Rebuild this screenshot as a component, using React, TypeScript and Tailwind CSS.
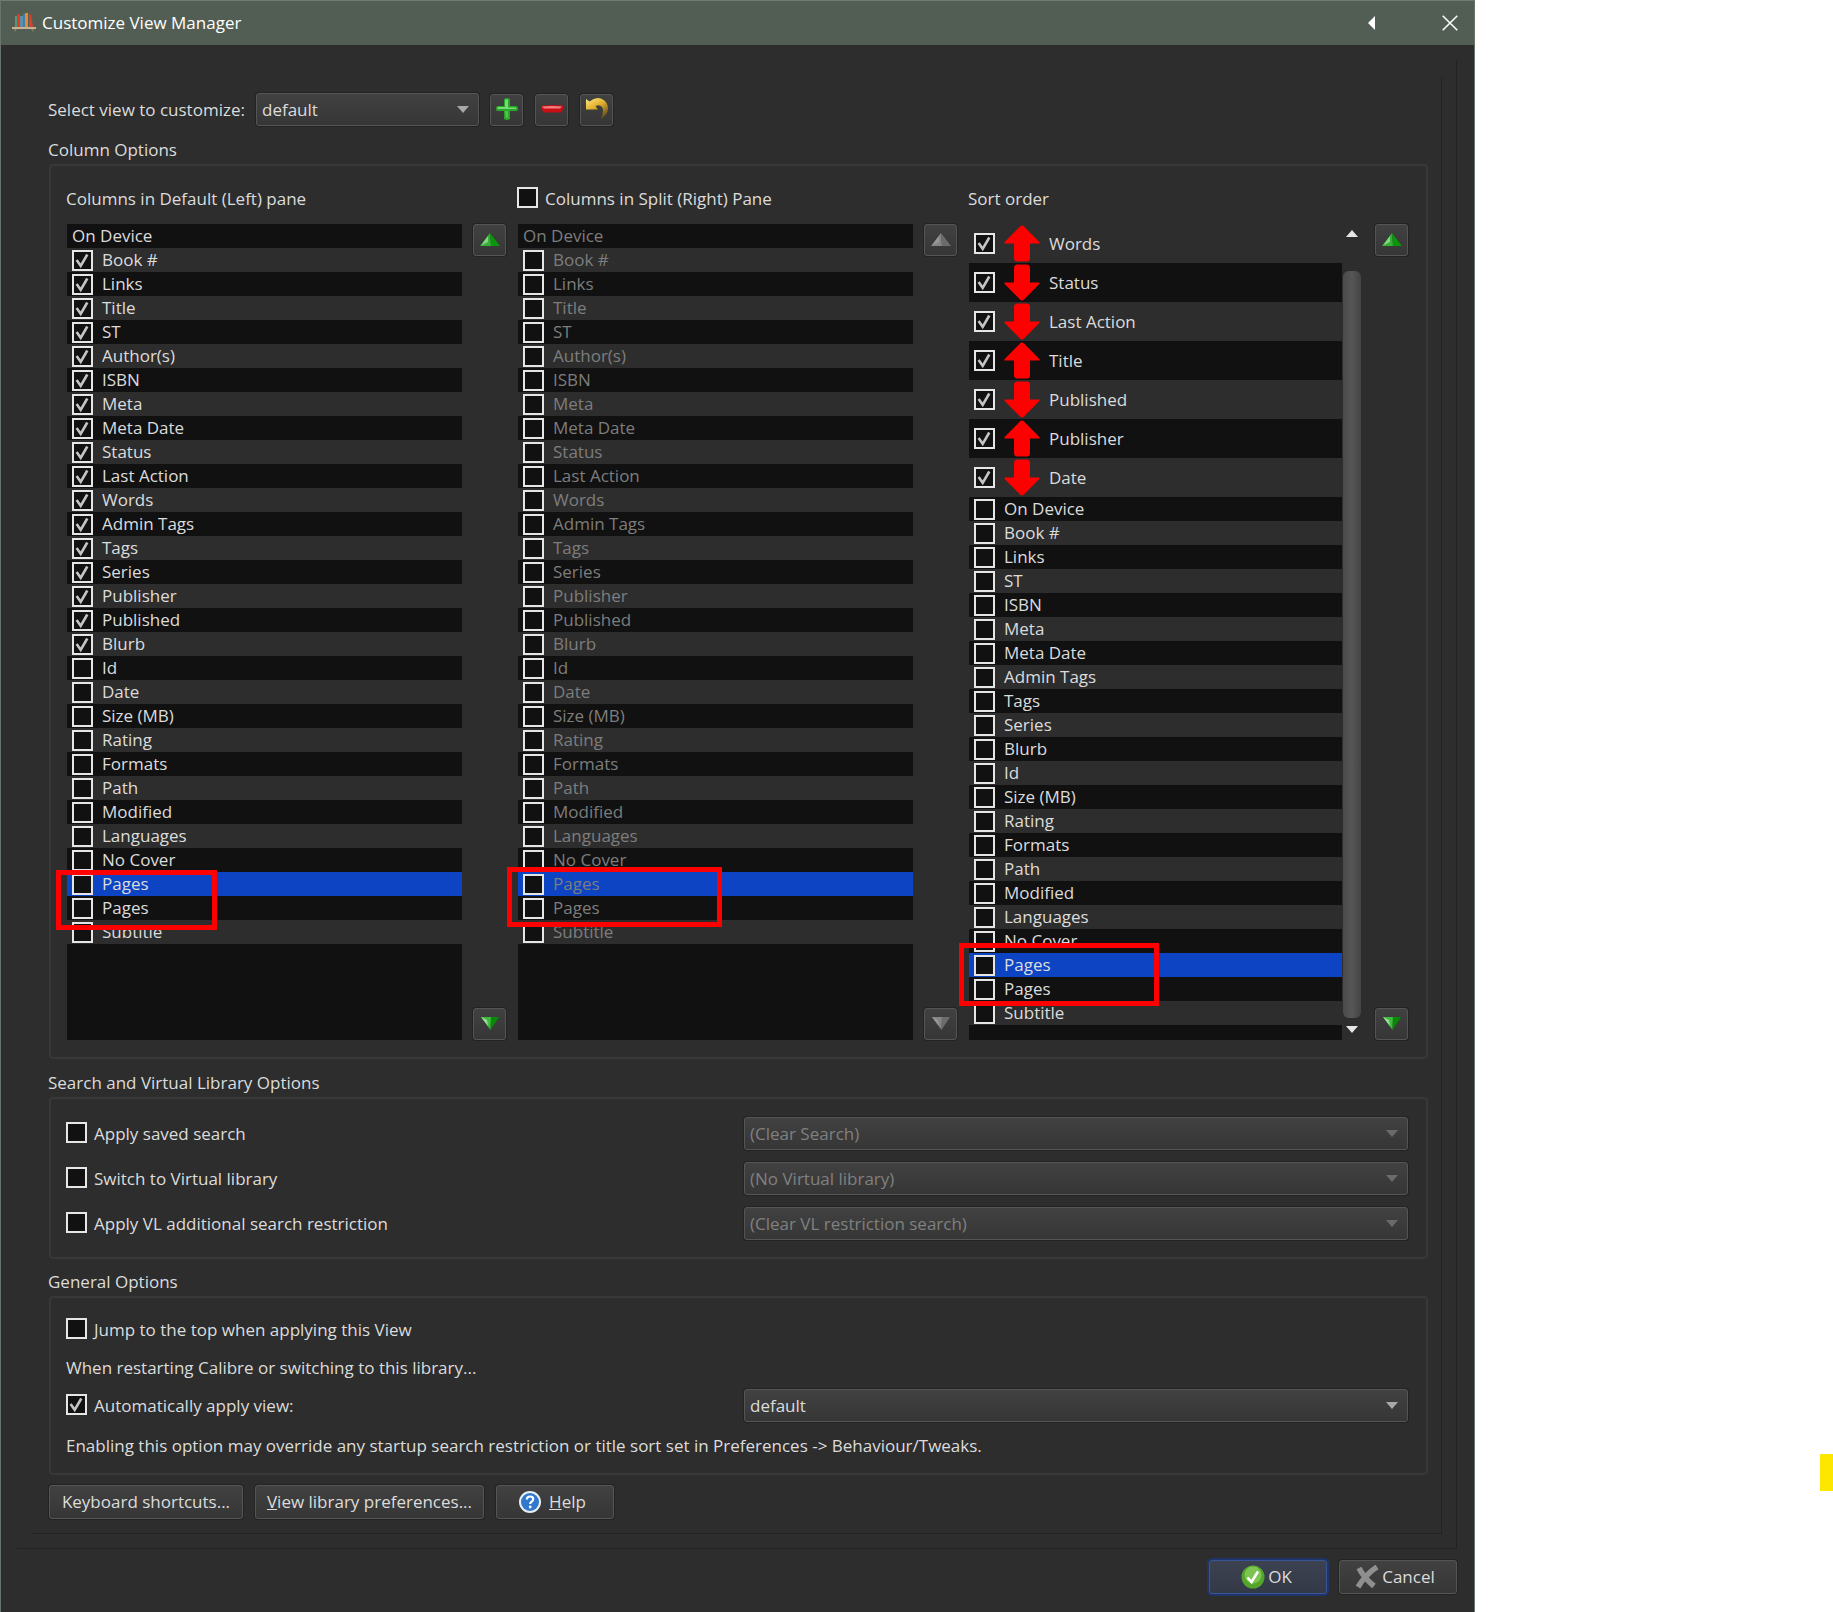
import React, { useState } from 'react';

const BOOK_COLUMNS = [
  'On Device', 'Book #', 'Links', 'Title', 'ST', 'Author(s)', 'ISBN', 'Meta', 'Meta Date', 'Status',
  'Last Action', 'Words', 'Admin Tags', 'Tags', 'Series', 'Publisher', 'Published', 'Blurb', 'Id', 'Date',
  'Size (MB)', 'Rating', 'Formats', 'Path', 'Modified', 'Languages', 'No Cover', 'Pages', 'Pages', 'Subtitle',
];

const LAST_VISIBLE = 17;
const SELECTED = 27;

const SORTED: { name: string; dir: 'up' | 'down' }[] = [
  { name: 'Words', dir: 'up' },
  { name: 'Status', dir: 'down' },
  { name: 'Last Action', dir: 'down' },
  { name: 'Title', dir: 'up' },
  { name: 'Published', dir: 'down' },
  { name: 'Publisher', dir: 'up' },
  { name: 'Date', dir: 'down' },
];

const UNSORTED = [
  'On Device', 'Book #', 'Links', 'ST', 'ISBN', 'Meta', 'Meta Date', 'Admin Tags', 'Tags', 'Series', 'Blurb',
  'Id', 'Size (MB)', 'Rating', 'Formats', 'Path', 'Modified', 'Languages', 'No Cover', 'Pages', 'Pages', 'Subtitle',
];
const UNSORTED_SELECTED = 19;

interface CheckProps {
  label: string;
  checked?: boolean;
  disabled?: boolean;
  children?: React.ReactNode;
  className?: string;
}

const Check: React.FC<CheckProps> = ({ label, checked = false, disabled = false, children, className = 'items-center' }) => {
  const [on, setOn] = useState(checked);

  return (
    <label className={`flex ${className}`}>
      <span className="grid shrink-0">
        <input
          type="checkbox"
          checked={on}
          disabled={disabled}
          onChange={() => setOn(!on)}
          className="col-start-1 row-start-1 size-[21px] appearance-none border-2 border-[#e6e6e6] bg-[#111111]"
        />
        {on && (
          <svg viewBox="0 0 21 21" className="pointer-events-none col-start-1 row-start-1 size-[21px]" fill="none">
            <path d="M4.600 10 L8.700 15.800 L15.300 4.500" stroke="#c4c4c4" strokeWidth="2.600" />
          </svg>
        )}
      </span>
      {children}
      <span>{label}</span>
    </label>
  );
};

interface ComboProps {
  label: string;
  value: string;
  disabled?: boolean;
  className?: string;
}

const Combo: React.FC<ComboProps> = ({ label, value, disabled = false, className = '' }) => (
  <div className={`grid items-center ${className}`}>
    <select
      aria-label={label}
      disabled={disabled}
      className="col-start-1 row-start-1 h-[33px] w-full appearance-none rounded-[3px] border border-[#555555] bg-linear-to-b from-[#414141] to-[#363636] pl-[5px] text-[#dcdcdc] opacity-100 shadow-[0_0_0_1px_#232323] disabled:text-[#808080]"
    >
      <option>{value}</option>
    </select>
    <svg
      viewBox="0 0 12 8"
      className={`pointer-events-none col-start-1 row-start-1 mr-[10px] h-[8px] w-[12px] justify-self-end ${disabled ? 'text-[#6a6a6a]' : 'text-[#a8a8a8]'}`}
    >
      <path d="M0 0 H12 L6 7 Z" fill="currentColor" />
    </svg>
  </div>
);

const ToolButton: React.FC<{ label: string; disabled?: boolean; children: React.ReactNode }> = ({ label, disabled, children }) => (
  <button
    type="button"
    aria-label={label}
    disabled={disabled}
    className="flex h-[32px] w-[33px] items-center justify-center rounded-[3px] border border-[#555555] bg-linear-to-b from-[#414141] to-[#363636] shadow-[0_0_0_1px_#232323]"
  >
    {children}
  </button>
);

const TextButton: React.FC<{ children: React.ReactNode; className?: string }> = ({ children, className = '' }) => (
  <button
    type="button"
    className={`flex h-[34px] items-center justify-center rounded-[3px] border border-[#555555] bg-linear-to-b from-[#414141] to-[#363636] shadow-[0_0_0_1px_#232323] ${className}`}
  >
    {children}
  </button>
);

const MoveIcon: React.FC<{ dir: 'up' | 'down'; disabled?: boolean }> = ({ dir, disabled }) => (
  <svg viewBox="0 0 20 14" className="h-[14px] w-[20px]">
    {dir === 'up' ? (
      <>
        <path d="M10 0 L0 13 H11 Z" fill={disabled ? '#858585' : '#35b035'} />
        <path d="M10 0 L20 13 H11 Z" fill={disabled ? '#6c6c6c' : '#0a960a'} />
        <path d="M8 3 L1 12.500 L8 9 Z" fill={disabled ? '#999999' : '#86d486'} />
      </>
    ) : (
      <>
        <path d="M1 0 H11 L10.500 13 Z" fill={disabled ? '#858585' : '#3dbb3d'} />
        <path d="M19 0 H11 L10.500 13 Z" fill={disabled ? '#6c6c6c' : '#078a07'} />
        <path d="M1 0 L8 9 L7 3 Z" fill={disabled ? '#999999' : '#a0dca0'} />
      </>
    )}
  </svg>
);

const SortArrow: React.FC<{ dir: 'up' | 'down' }> = ({ dir }) => (
  <svg viewBox="0 0 36 37" className={`mx-[9px] h-[37px] w-[36px] ${dir === 'down' ? 'rotate-180' : ''}`}>
    <path
      d="M18 .5 Q19 .5 20 1.6 L35.3 17 Q36.3 18.5 34.5 18.5 H26 V33 Q26 36.5 22.5 36.5 H13.5 Q10 36.5 10 33 V18.5 H1.5 Q-.3 18.5 .7 17 L16 1.6 Q17 .5 18 .5 Z"
      fill="#ff0000"
    />
  </svg>
);

const MoveButtons: React.FC<{ disabled?: boolean; name: string }> = ({ disabled, name }) => (
  <div className="flex shrink-0 flex-col justify-between">
    <ToolButton label={`Move ${name} up`} disabled={disabled}><MoveIcon dir="up" disabled={disabled} /></ToolButton>
    <ToolButton label={`Move ${name} down`} disabled={disabled}><MoveIcon dir="down" disabled={disabled} /></ToolButton>
  </div>
);

const ColumnList: React.FC<{ disabled?: boolean }> = ({ disabled = false }) => (
  <ul className={`h-[816px] flex-1 bg-[#111111] ${disabled ? 'text-[#7d7d7d]' : ''}`}>
    {BOOK_COLUMNS.map((name, i) => (
      <li
        key={i}
        className={`flex h-[24px] items-center pl-[5px] ${i === SELECTED ? 'bg-[#0c44c4]' : i % 2 ? 'bg-[#2d2d2d]' : 'bg-[#111111]'}`}
      >
        {i === 0 ? <span>{name}</span> : (
          <Check label={name} disabled={disabled} checked={!disabled && i <= LAST_VISIBLE} className="items-center gap-[9px]" />
        )}
      </li>
    ))}
  </ul>
);

const SortList: React.FC = () => (
  <ul className="h-[816px] flex-1 bg-[#111111]">
    {SORTED.map(({ name, dir }, i) => (
      <li key={name} className={`flex h-[39px] items-center pl-[5px] ${i % 2 ? 'bg-[#111111]' : 'bg-[#2d2d2d]'}`}>
        <Check label={name} checked><SortArrow dir={dir} /></Check>
      </li>
    ))}
    {UNSORTED.map((name, i) => (
      <li
        key={i}
        className={`flex h-[24px] items-center pl-[5px] ${i === UNSORTED_SELECTED ? 'bg-[#0c44c4]' : i % 2 ? 'bg-[#2d2d2d]' : 'bg-[#111111]'}`}
      >
        <Check label={name} className="items-center gap-[9px]" />
      </li>
    ))}
  </ul>
);

const ScrollBar: React.FC = () => (
  <div className="flex w-[20px] flex-col items-center justify-between pt-[6px] pb-[7px]">
    <svg viewBox="0 0 12 7" className="h-[7px] w-[12px]"><path d="M0 7 L6 0 L12 7 Z" fill="#e6e6e6" /></svg>
    <div className="mt-[34px] mb-[8px] w-[18px] flex-1 rounded-[6px] bg-linear-to-r from-[#4a4a4a] via-[#565656] to-[#444444]" />
    <svg viewBox="0 0 12 7" className="h-[7px] w-[12px]"><path d="M0 0 L6 7 L12 0 Z" fill="#e6e6e6" /></svg>
  </div>
);

const Group: React.FC<{ title: string; children: React.ReactNode; className?: string }> = ({ title, children, className = '' }) => (
  <section>
    <h2 className="h-[28px] pl-[1px] leading-[28px]">{title}</h2>
    <div className={`ml-[2px] rounded-[4px] border-2 border-[#383838] ${className}`}>{children}</div>
  </section>
);

const BooksIcon: React.FC = () => (
  <svg viewBox="0 0 24 22" className="h-[22px] w-[24px]">
    <rect x="3" y="4" width="2" height="11" fill="#4f9a78" />
    <rect x="5" y="2" width="3" height="13" fill="#e03a22" />
    <rect x="8" y="4" width="3" height="11" fill="#5f8fa8" />
    <rect x="11" y="2" width="2" height="13" fill="#3b7fb5" />
    <rect x="13" y="1" width="3" height="14" fill="#e88a2c" />
    <path d="M17 3 l2 -1 l2 13 h-4 Z" fill="#d6402a" />
    <path d="M0 15 H24 V17 H0 Z" fill="#c8b090" />
    <path d="M2 17 h3 l-2 3 Z M19 17 h3 l-1 3 Z" fill="#8a7a60" />
  </svg>
);

const App: React.FC = () => (
  <div className="flex min-h-screen bg-white font-['Open_Sans',sans-serif] text-[17px] leading-[24px] text-[#dcdcdc]">
    <div className="flex flex-1 flex-col border-x border-[#66746a] bg-[#2d2d2d]">
      <header className="flex h-[45px] items-center border-t border-[#6b7d6f] bg-[#525e54] pl-[11px] pr-[16px] text-white">
        <BooksIcon />
        <h1 className="ml-[6px] flex-1">Customize View Manager</h1>
        <button type="button" aria-label="Collapse" className="mr-[66px]">
          <svg viewBox="0 0 8 14" className="h-[14px] w-[8px]"><path d="M7 0 V14 L0 7 Z" fill="#ffffff" /></svg>
        </button>
        <button type="button" aria-label="Close">
          <svg viewBox="0 0 16 16" className="h-[16px] w-[16px]"><path d="M.7 .7 L15.3 15.3 M15.3 .7 L.7 15.3" stroke="#ffffff" strokeWidth="1.5" /></svg>
        </button>
      </header>

      <div className="ml-[16px] mr-[17px] mt-[15px] border-r border-b border-[#222222] pb-[14px] pr-[14px]">
        <div className="ml-[15px] mt-[17px] border-r border-b border-[#222222] pl-[15px] pr-[13px] pt-[16px] pb-[14px]">
          {/* View picker */}
          <div className="flex items-center">
            <span className="w-[209px] pl-[1px]">Select view to customize:</span>
            <Combo label="Select view to customize" value="default" className="w-[223px]" />
            <div className="ml-[11px] flex gap-[12px]">
              <ToolButton label="Add view">
                <svg viewBox="0 0 24 24" className="mb-[2px] size-[24px]">
                  <path d="M9 2 Q12 0 15 2 V9 H22 Q24 12 22 14 H15 V22 Q12 24 9 22 V14 H2 Q0 12 2 9 H9 Z" fill="#2aa52a" />
                  <path d="M10 3 Q12 1.500 13 3 V10.500 H21 V12 H3 Q2 11 3 10 H10 Z" fill="#72dc72" />
                  <path d="M10 14 H13 V21 H11 Z" fill="#4cc64c" />
                </svg>
              </ToolButton>
              <ToolButton label="Remove view">
                <svg viewBox="0 0 24 24" className="mb-[2px] size-[24px]">
                  <path d="M1 9 Q12 7.500 23 8.500 Q23.500 13 21 15.500 H4 Q1 13 1 9 Z" fill="#c80f18" />
                  <path d="M2 9.500 Q12 8.500 22 9.500 L20 11.500 H4 Z" fill="#f08080" />
                </svg>
              </ToolButton>
              <ToolButton label="Undo changes">
                <svg viewBox="0 0 24 24" className="mb-[2px] size-[24px]">
                  <defs>
                    <linearGradient id="undo" x1="0" y1="0" x2="0.6" y2="1">
                      <stop offset="0" stopColor="#ffe98a" />
                      <stop offset="0.5" stopColor="#e2b02c" />
                      <stop offset="1" stopColor="#6e5520" />
                    </linearGradient>
                  </defs>
                  <path d="M1 2 L4.500 4.500 Q11 -1 17 2 Q23 5 23 12 Q22.500 18 16 21.500 Q19 15 17.500 11 Q15.500 7 10.500 9 L13 12.500 H1 Z" fill="url(#undo)" />
                </svg>
              </ToolButton>
            </div>
          </div>

          <div className="mt-[10px]">
            <Group title="Column Options" className="grid grid-cols-3 gap-[11px] pl-[15px] pr-[18px] pt-[21px] pb-[17px]">
              <div className="relative">
                <div className="h-[37px]">Columns in Default (Left) pane</div>
                <div className="flex gap-[11px] pl-[1px]">
                  <ColumnList />
                  <MoveButtons name="left column" />
                </div>
                <div className="pointer-events-none absolute -left-[10px] top-[683px] h-[60px] w-[161px] border-[5px] border-[#ff0000]" />
              </div>
              <div className="relative">
                <Check label="Columns in Split (Right) Pane" className="h-[37px] items-start gap-[7px]" />
                <div className="flex gap-[11px] pl-[1px]">
                  <ColumnList disabled />
                  <MoveButtons name="right column" disabled />
                </div>
                <div className="pointer-events-none absolute -left-[10px] top-[680px] h-[60px] w-[215px] border-[5px] border-[#ff0000]" />
              </div>
              <div className="relative">
                <div className="h-[37px]">Sort order</div>
                <div className="flex pl-[1px]">
                  <SortList />
                  <ScrollBar />
                  <div className="ml-[13px] flex"><MoveButtons name="sort column" /></div>
                </div>
                <div className="pointer-events-none absolute -left-[9px] top-[756px] h-[63px] w-[200px] border-[5px] border-[#ff0000]" />
              </div>
            </Group>
          </div>

          <div className="mt-[10px]">
            <Group title="Search and Virtual Library Options" className="flex flex-col gap-[12px] pl-[15px] pr-[18px] pt-[18px] pb-[17px]">
              <div className="flex items-center">
                <Check label="Apply saved search" className="flex-1 items-start gap-[7px]" />
                <Combo label="Saved search" value="(Clear Search)" disabled className="w-[664px]" />
              </div>
              <div className="flex items-center">
                <Check label="Switch to Virtual library" className="flex-1 items-start gap-[7px]" />
                <Combo label="Virtual library" value="(No Virtual library)" disabled className="w-[664px]" />
              </div>
              <div className="flex items-center">
                <Check label="Apply VL additional search restriction" className="flex-1 items-start gap-[7px]" />
                <Combo label="VL restriction" value="(Clear VL restriction search)" disabled className="w-[664px]" />
              </div>
            </Group>
          </div>

          <div className="mt-[9px]">
            <Group title="General Options" className="pl-[15px] pr-[18px] pt-[20px] pb-[15px]">
              <Check label="Jump to the top when applying this View" className="items-start gap-[7px]" />
              <p className="mt-[14px]">When restarting Calibre or switching to this library...</p>
              <div className="mt-[9px] flex items-center">
                <Check label="Automatically apply view:" checked className="flex-1 items-start gap-[7px]" />
                <Combo label="Automatically apply view" value="default" className="w-[664px]" />
              </div>
              <p className="mt-[12px]">
                Enabling this option may override any startup search restriction or title sort set in Preferences -&gt; Behaviour/Tweaks.
              </p>
            </Group>
          </div>

          <div className="ml-[2px] mt-[10px] flex gap-[12px]">
            <TextButton className="w-[194px]">Keyboard shortcuts...</TextButton>
            <TextButton className="w-[229px]"><span><u>V</u>iew library preferences...</span></TextButton>
            <TextButton className="w-[118px] gap-[8px] pr-[5px]">
              <svg viewBox="0 0 22 22" className="size-[22px]">
                <circle cx="11" cy="11" r="11" fill="#e8eef5" />
                <circle cx="11" cy="11" r="9" fill="#2f78cc" />
                <path d="M7.8 8.5 Q8 5.5 11 5.5 Q14.2 5.5 14.2 8.3 Q14.2 10 12.3 11 Q11.2 11.7 11.2 13" stroke="#ffffff" strokeWidth="2.2" fill="none" />
                <circle cx="11.2" cy="16" r="1.4" fill="#ffffff" />
              </svg>
              <span><u>H</u>elp</span>
            </TextButton>
          </div>
        </div>
      </div>

      <footer className="flex justify-end gap-[12px] pb-[16px] pr-[17px] pt-[11px]">
        <button
          type="button"
          className="flex h-[34px] w-[118px] items-center justify-center gap-[3px] rounded-[3px] border border-[#3a5596] bg-linear-to-b from-[#3c4250] to-[#333947] pr-[3px] shadow-[0_0_0_2px_#1f3468]"
        >
          <svg viewBox="0 0 24 24" className="size-[24px]">
            <circle cx="12" cy="12" r="11.5" fill="#55a52c" />
            <circle cx="12" cy="10" r="8.5" fill="#7cc552" />
            <path d="M6.5 12.5 L10.5 17 L17 6.5" stroke="#ffffff" strokeWidth="2.6" fill="none" />
          </svg>
          OK
        </button>
        <TextButton className="w-[118px] gap-[3px] pr-[6px]">
          <svg viewBox="0 0 24 24" className="size-[24px]">
            <path d="M4 3 Q9 13 19 21 M22 2 Q11 9 3 22" stroke="#8f8f8f" strokeWidth="5.5" fill="none" />
          </svg>
          Cancel
        </TextButton>
      </footer>
    </div>

    <aside className="flex w-[358px] flex-col items-end justify-end bg-white pb-[121px]">
      <div className="h-[37px] w-[13px] bg-[#fde600]" />
    </aside>
  </div>
);

export default App;
